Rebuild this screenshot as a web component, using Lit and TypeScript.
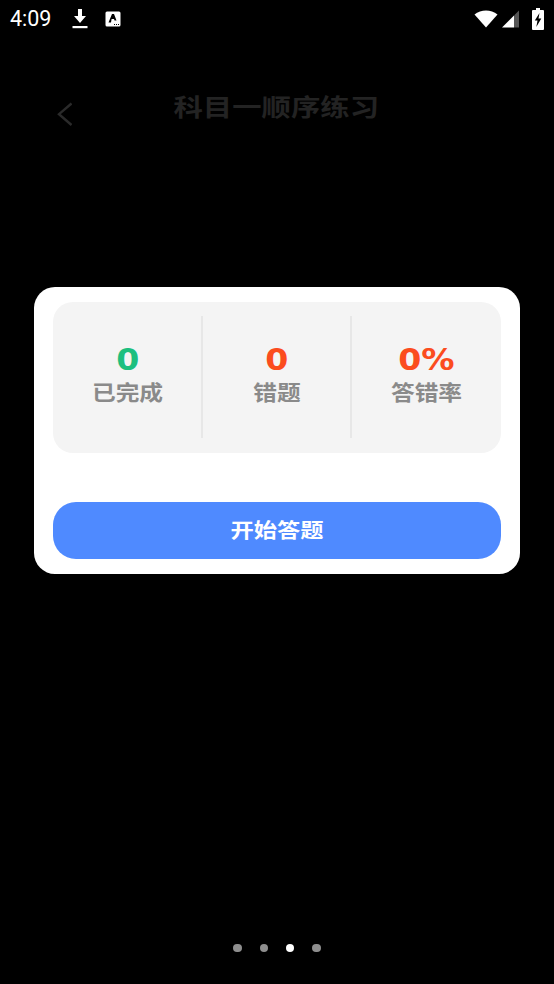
import { LitElement, html, css } from "lit";
import { customElement } from "lit/decorators.js";

@customElement("app-root")
export class AppRoot extends LitElement {
  static styles = css`
    :host {
      display: block;
      position: relative;
      width: 554px;
      height: 984px;
      background: #000;
      overflow: hidden;
      font-family: "Noto Sans CJK SC", "Liberation Sans", sans-serif;
    }
    .status {
      height: 38px;
      box-sizing: border-box;
      padding: 0 10px;
      display: flex;
      align-items: center;
      color: #fff;
    }
    .time {
      font: 400 21.5px/38px Roboto, sans-serif;
      width: 61px;
    }
    .sicon { display: block; }
    .dl { margin-right: 16px; }
    .spacer { flex: 1; }
    .wifi { margin-right: 4px; }
    .sig { margin-right: 12px; }
    .header {
      height: 100px;
      display: grid;
      grid-template-columns: 1fr auto 1fr;
      align-items: start;
    }
    .back { display: block; margin: 63px 0 0 54px; }
    .title {
      margin: 53.5px 1px 0 0;
      color: #232323;
      font-size: 23.5px;
      line-height: 28px;
      font-weight: 700;
      transform: scaleX(1.25);
    }
    .overlay {
      position: absolute;
      left: 34px;
      top: 287px;
      width: 486px;
      height: 287px;
      box-sizing: border-box;
      padding: 15px 19px;
      background: #fff;
      border-radius: 21px;
      display: flex;
      flex-direction: column;
    }
    .stats {
      height: 150.5px;
      flex: none;
      background: #f4f4f4;
      border-radius: 20px;
      display: grid;
      grid-template-columns: 1fr 1fr 1fr;
      align-items: center;
      padding: 14px 0;
      box-sizing: border-box;
    }
    .stat {
      height: 122px;
      display: flex;
      flex-direction: column;
      align-items: center;
      padding-top: 28px;
      box-sizing: border-box;
      border-left: 2px solid #e7e7e7;
      margin-left: -1.5px;
    }
    .stat:first-child { border-left: none; margin-left: 0; }
    .num {
      font-family: "DejaVu Sans", sans-serif;
      font-weight: 700;
      font-size: 31px;
      line-height: 30px;
      transform: scaleX(1.07);
    }
    .green { color: #1cbf7f; }
    .red { color: #fb4c1e; }
    .label {
      margin-top: 4px;
      font-size: 21px;
      line-height: 26px;
      font-weight: 700;
      color: #8a8a8a;
      transform: scaleX(1.13);
    }
    .btn {
      margin-top: 49.5px;
      height: 57px;
      flex: none;
      background: #4f8aff;
      border-radius: 23px;
      display: flex;
      justify-content: center;
    }
    .btn span {
      color: #fff;
      font-size: 20.5px;
      font-weight: 700;
      line-height: 55px;
      transform: scaleX(1.135);
    }
    .dots {
      position: absolute;
      left: 0;
      right: 0;
      top: 943.5px;
      display: flex;
      justify-content: center;
      gap: 17.7px;
    }
    .dot { width: 8.5px; height: 8.5px; border-radius: 50%; background: #8e8e8e; }
    .dot.on { background: #fff; }
  `;

  render() {
    return html`
      <div class="status">
        <span class="time">4:09</span>
        <svg class="sicon dl" width="18" height="22" viewBox="0 0 18 22">
          <path d="M7 1h4v7h4l-6 7-6-7h4z" fill="#fff" />
          <rect x="1.5" y="18" width="15" height="2.2" fill="#fff" />
        </svg>
        <svg class="sicon" width="16" height="16" viewBox="0 0 16 16">
          <rect x="0.5" y="0.5" width="15" height="15" rx="1.5" fill="#fff" />
          <path d="M3.5 11.5 7 3h2l2.500 6.500h-2L9 8H6.600L6 11.500z" fill="#000" />
          <path d="M9 13h1v1H9zM11 13h1v1h-1zM13 13h1v1h-1z" fill="#000" />
        </svg>
        <span class="spacer"></span>
        <svg class="sicon wifi" width="24" height="18" viewBox="0 0 24 18">
          <path d="M0.5 4.500C7 -1 17 -1 23.500 4.500L12 17.500z" fill="#fff" />
        </svg>
        <svg class="sicon sig" width="18" height="18" viewBox="0 0 18 18">
          <path d="M12 5.500 17 0.500V17.500H12z" fill="#555" />
          <path d="M0 17.500 12 5.500V17.500z" fill="#fff" />
        </svg>
        <svg class="sicon" width="12" height="22" viewBox="0 0 12 22">
          <path d="M4 0h4v2h3a1 1 0 0 1 1 1v18a1 1 0 0 1-1 1H1a1 1 0 0 1-1-1V3a1 1 0 0 1 1-1h3z" fill="#fff" />
          <path d="M7.500 5 2.800 12.500h2.700L4.300 19l5-8.500H6.500z" fill="#000" />
        </svg>
      </div>
      <div class="header">
        <svg class="back" width="18" height="26" viewBox="0 0 18 26">
          <path d="M17.500 2.500 5 13.200 17.500 24" fill="none" stroke="#2a2a2a" stroke-width="2.400" />
        </svg>
        <div class="title">科目一顺序练习</div>
      </div>
      <div class="overlay">
        <div class="stats">
          <div class="stat">
            <div class="num green">0</div>
            <div class="label">已完成</div>
          </div>
          <div class="stat">
            <div class="num red">0</div>
            <div class="label">错题</div>
          </div>
          <div class="stat">
            <div class="num red">0%</div>
            <div class="label">答错率</div>
          </div>
        </div>
        <div class="btn"><span>开始答题</span></div>
      </div>
      <div class="dots">
        <span class="dot"></span>
        <span class="dot"></span>
        <span class="dot on"></span>
        <span class="dot"></span>
      </div>
    `;
  }
}
